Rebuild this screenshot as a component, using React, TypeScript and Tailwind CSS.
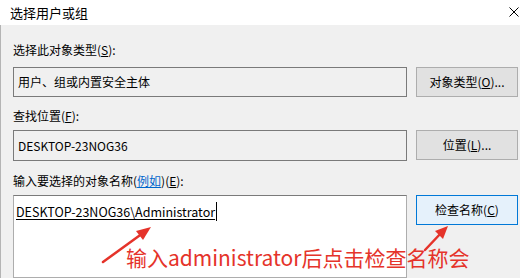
import React from 'react';

const font = { fontFamily: '"Noto Sans CJK SC", "Noto Sans", sans-serif' };

const Btn: React.FC<{ children: React.ReactNode; active?: boolean }> = ({ children, active }) => (
  <div
    className={`w-[102px] h-[30px] flex items-center justify-center text-[12px] text-black border ${
      active ? 'bg-[#e5f1fb] border-[#0078d7]' : 'bg-[#e1e1e1] border-[#adadad]'
    }`}
  >
    {children}
  </div>
);

export default function App() {
  return (
    <div className="w-[520px] h-[278px] overflow-hidden relative bg-[#f0f0f0] text-black" style={font}>
      {/* title bar */}
      <div className="h-[25px] bg-white flex items-center justify-between pl-[10px] pr-[1px]">
        <span className="text-[13px] leading-none">选择用户或组</span>
        <svg width="10" height="10" viewBox="0 0 10 10" className="mb-[2px]">
          <path d="M0.5 0.5L9.5 9.5M9.5 0.5L0.5 9.5" stroke="#000" strokeWidth="1" />
        </svg>
      </div>

      <div className="border-l border-[#b4b4b4] h-[253px] pl-[12px] pr-[2px] flex flex-col">
        <div className="mt-[17px] h-[16px] text-[12px] leading-[16px]">
          选择此对象类型(<span className="underline">S</span>):
        </div>
        <div className="mt-[9px] flex gap-[9px] items-start">
          <div className="flex-1 h-[30px] border border-[#7a7a7a] bg-[#f0f0f0] px-[4px] flex items-center text-[12px]">
            用户、组或内置安全主体
          </div>
          <Btn>
            对象类型(<span className="underline">O</span>)...
          </Btn>
        </div>

        <div className="mt-[11px] h-[16px] text-[12px] leading-[16px]">
          查找位置(<span className="underline">F</span>):
        </div>
        <div className="mt-[6px] flex gap-[9px] items-start">
          <div className="flex-1 h-[31px] border border-[#7a7a7a] bg-[#f0f0f0] px-[4px] flex items-center text-[12px]">
            DESKTOP-23NOG36
          </div>
          <Btn>
            位置(<span className="underline">L</span>)...
          </Btn>
        </div>

        <div className="mt-[12px] h-[16px] text-[12px] leading-[16px]">
          输入要选择的对象名称(<span className="text-[#0066cc] underline">例如</span>)(<span className="underline">E</span>):
        </div>
        <div className="mt-[6px] flex gap-[9px] items-start flex-1">
          <div className="flex-1 h-full border border-[#adadad] border-t-[#7a7a7a] bg-white px-[2px] pt-[7px] text-[12.5px]">
            <span className="underline underline-offset-2 border-r border-black pr-[1px]">
              DESKTOP-23NOG36\Administrator
            </span>
          </div>
          <Btn active>
            检查名称(<span className="underline">C</span>)
          </Btn>
        </div>
      </div>

      {/* annotation */}
      <div className="absolute left-[126px] top-[247px] text-[21px] leading-none text-[#e5332a] whitespace-nowrap">
        输入administrator后点击检查名称会
      </div>
      <svg className="absolute left-0 top-0" width="520" height="278" viewBox="0 0 520 278">
        <path d="M103 262 L143 233" stroke="#e5332a" strokeWidth="2.5" strokeLinecap="round" />
        <path d="M151 227 L136 231 L143 240 Z" fill="#e5332a" />
        <path d="M425 250 L442 232" stroke="#e5332a" strokeWidth="2.5" strokeLinecap="round" />
        <path d="M448 226 L435 231 L443 239 Z" fill="#e5332a" />
      </svg>
    </div>
  );
}
